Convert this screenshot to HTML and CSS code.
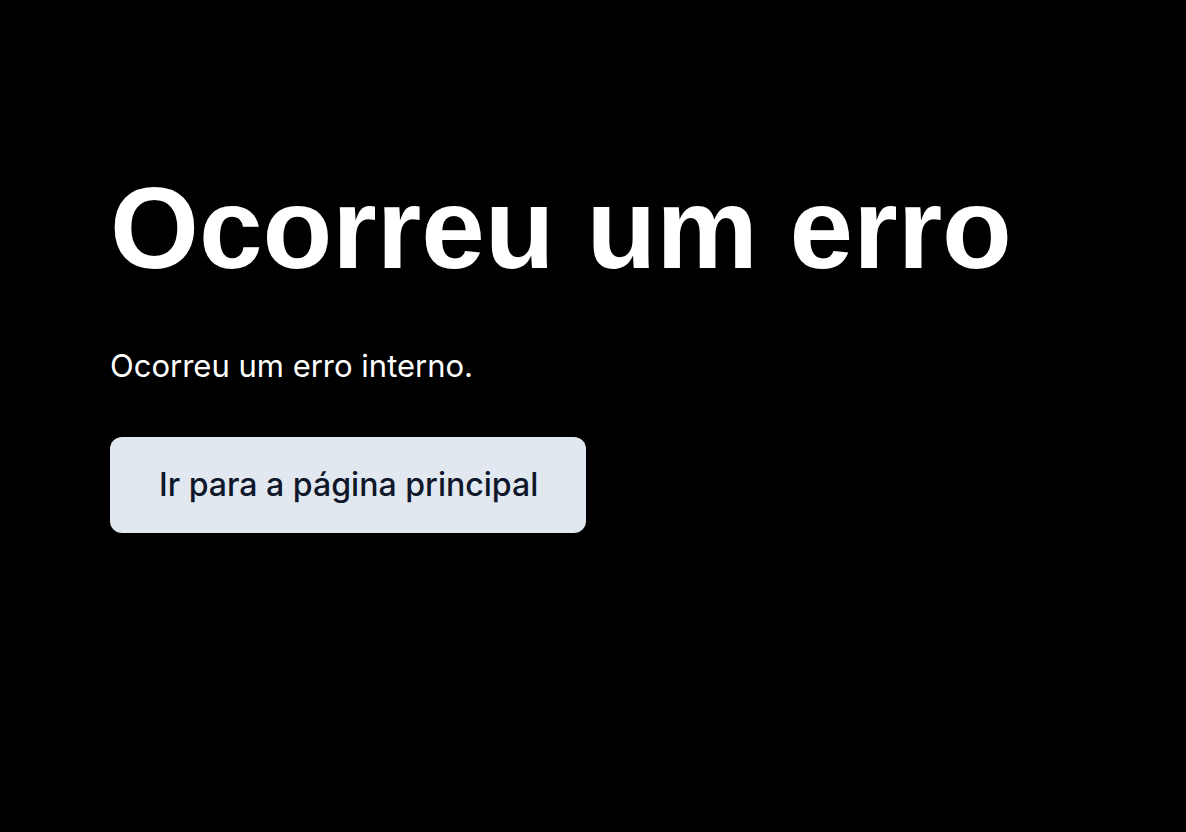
FILE: index.html
```html
<!DOCTYPE html>
<html lang="pt">
<head>
    <meta charset="UTF-8">
    <meta name="viewport" content="width=device-width, initial-scale=1.0">
    <title>Erro</title>
    <link rel="stylesheet" href="styles.css">
</head>
<body>
    <main class="error-page">
        <h1 class="error-title">Ocorreu um erro</h1>
        <p class="error-text">Ocorreu um erro interno.</p>
        <a class="home-button" href="#">Ir para a página principal</a>
    </main>
</body>
</html>
```

FILE: styles.css
```css
* {
    box-sizing: border-box;
}

html,
body {
    margin: 0;
    height: 100%;
    background-color: #000;
}

body {
    font-family: Inter, "Noto Sans", sans-serif;
    color: #fff;
}

.error-page {
    display: flex;
    flex-direction: column;
    align-items: flex-start;
    padding: 160px 110px;
}

.error-title {
    margin: 0;
    font-family: "Liberation Sans", Arial, sans-serif;
    font-weight: 700;
    font-size: 114.3px;
    line-height: 1.2;
}

.error-text {
    margin: 50px 0 0;
    font-size: 31px;
    line-height: 1.2;
}

.home-button {
    margin-top: 53px;
    padding: 30px 48px 30px 49px;
    background-color: #e2e8f0;
    color: #0f172a;
    border-radius: 12px;
    font-size: 32.1px;
    font-weight: 500;
    line-height: 36px;
    text-decoration: none;
}
```
